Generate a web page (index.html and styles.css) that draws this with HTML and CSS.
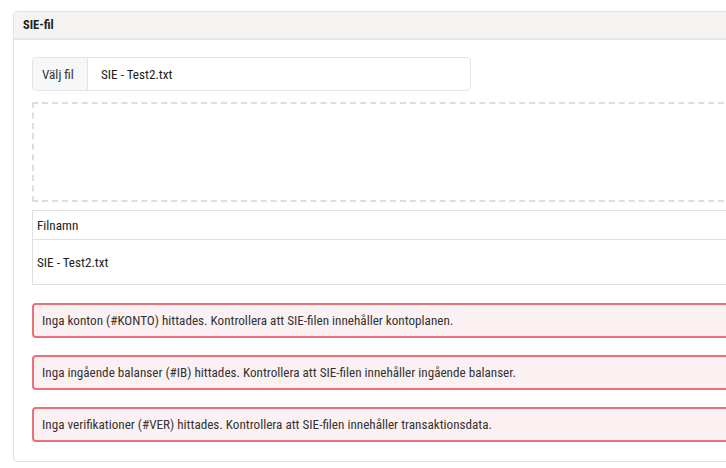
FILE: index.html
```html
<!DOCTYPE html>
<html lang="sv">
<head>
<meta charset="utf-8">
<link rel="stylesheet" href="styles.css">
</head>
<body>
<div class="card">
  <div class="card-header">SIE-fil</div>
  <div class="card-body">
    <div class="input-group">
      <span class="addon">Välj fil</span>
      <span class="file-name">SIE - Test2.txt</span>
    </div>
    <div class="dropzone"></div>
    <table class="files">
      <thead><tr><th>Filnamn</th></tr></thead>
      <tbody><tr><td>SIE - Test2.txt</td></tr></tbody>
    </table>
    <div class="alerts">
      <div class="alert">Inga konton (#KONTO) hittades. Kontrollera att SIE-filen innehåller kontoplanen.</div>
      <div class="alert">Inga ingående balanser (#IB) hittades. Kontrollera att SIE-filen innehåller ingående balanser.</div>
      <div class="alert">Inga verifikationer (#VER) hittades. Kontrollera att SIE-filen innehåller transaktionsdata.</div>
    </div>
  </div>
</div>
</body>
</html>
```
FILE: styles.css
```css
html, body {
  margin: 0;
  padding: 0;
  background: #fff;
  overflow: hidden;
}
body {
  padding: 11px 0 0 13px;
  font-family: "Roboto Condensed", Roboto, "Liberation Sans", sans-serif;
  font-stretch: condensed;
  font-size: 13.15px;
  color: #333;
}
.card {
  width: 760px;
  border: 1px solid #e2e2e2;
  border-radius: 4px;
  background: #fff;
  box-sizing: border-box;
}
.card-header {
  height: 26px;
  line-height: 26px;
  padding: 0 9px;
  background: #f5f4f2;
  border-bottom: 2px solid #e6e6e6;
  font-weight: 700;
  font-size: 12.5px;
  color: #222;
  border-radius: 4px 4px 0 0;
}
.card-body {
  padding: 17px 18px 19px 18px;
}
.input-group {
  display: flex;
  width: 439px;
  height: 34px;
  border: 1px solid #e4e4e4;
  border-radius: 4px;
  box-sizing: border-box;
  overflow: hidden;
}
.addon {
  width: 55px;
  background: #f6f7f9;
  border-right: 1px solid #e4e4e4;
  display: flex;
  align-items: center;
  padding-left: 9px;
  box-sizing: border-box;
  color: #333;
}
.file-name {
  display: flex;
  align-items: center;
  padding-left: 13px;
  color: #222;
}
.dropzone {
  margin-top: 11px;
  height: 100px;
  border: 2px dashed #dedede;
  box-sizing: border-box;
}
.files {
  margin-top: 8px;
  width: 100%;
  border-collapse: collapse;
  border: 1px solid #e0e0e0;
}
.files th {
  text-align: left;
  font-weight: 400;
  height: 28px;
  padding: 0 4px;
  border-bottom: 1px solid #e0e0e0;
  color: #222;
}
.files td {
  height: 44px;
  padding: 0 4px;
  color: #222;
}
.alerts {
  margin-top: 18px;
  display: flex;
  flex-direction: column;
  gap: 17px;
}
.alert {
  height: 35px;
  box-sizing: border-box;
  border: 2px solid #e8717a;
  border-radius: 4px;
  background: #fcf1f2;
  display: flex;
  align-items: center;
  padding-left: 8px;
  color: #333;
}
```
